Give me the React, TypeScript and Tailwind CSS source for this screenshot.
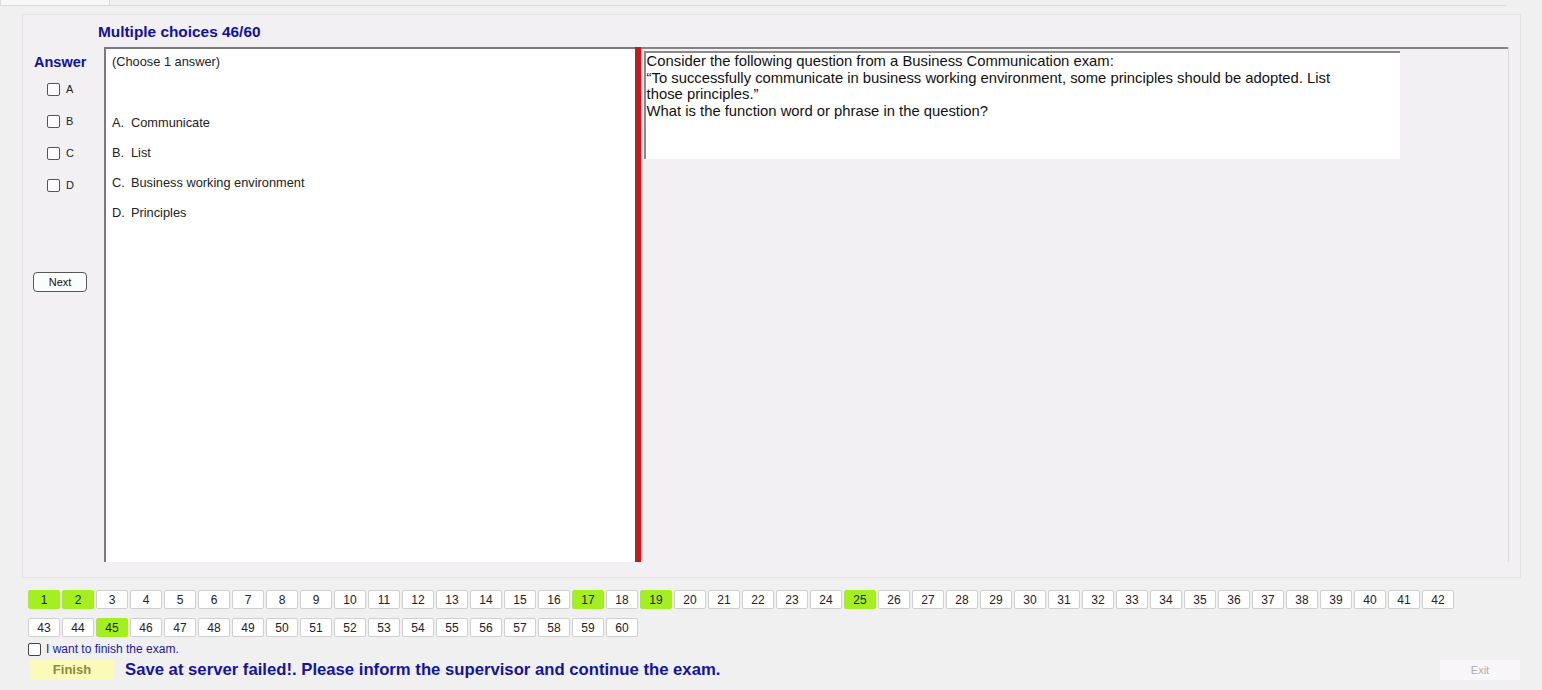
import React from 'react';

const greenNums = [1, 2, 17, 19, 25, 45];

const NumButton: React.FC<{ n: number }> = ({ n }) => {
  const done = greenNums.includes(n);
  return (
    <button
      className={`w-[32px] h-[19px] flex items-center justify-center text-[12px] leading-none rounded-[2px] ${
        done ? 'bg-[#a3ef1f] border border-[#a3ef1f] text-[#222]' : 'bg-white border border-[#cfcfcf] text-[#222]'
      }`}
    >
      {n}
    </button>
  );
};

const App: React.FC = () => {
  const row1 = Array.from({ length: 42 }, (_, i) => i + 1);
  const row2 = Array.from({ length: 18 }, (_, i) => i + 43);

  return (
    <div
      className="w-[1542px] h-[690px] bg-[#f0f0f0] flex flex-col overflow-hidden text-[#111]"
      style={{ fontFamily: '"Liberation Sans", Arial, sans-serif' }}
    >
      {/* tab strip */}
      <div className="h-[6px] flex">
        <div className="w-[110px] h-[6px] bg-[#f7f7f7] border-x border-b border-[#dcdcdc]" />
        <div className="w-[1396px] border-b border-[#dcdcdc]" />
      </div>

      {/* main panel */}
      <div className="mt-[8px] ml-[22px] w-[1499px] h-[564px] bg-[#f2f0f2] border border-[#e4e4e4] flex flex-col">
        <div className="h-[32px] pl-[75px] pt-[8px] leading-[18px]">
          <span className="text-[15.4px] font-bold text-[#1010a2]">Multiple choices 46/60</span>
        </div>

        <div className="flex h-[515px]">
          {/* answer column */}
          <div className="w-[81px] flex flex-col">
            <div className="pl-[11px] pt-[7px] text-[14.5px] leading-[17px] font-bold text-[#1010a2]">Answer</div>
            <div className="flex flex-col gap-[19px] mt-[12px] pl-[24px]">
              {['A', 'B', 'C', 'D'].map(l => (
                <label key={l} className="flex items-center gap-[6px] h-[13px] text-[11px] text-[#222]">
                  <span className="w-[13px] h-[13px] border border-[#555] rounded-[2px] bg-white" />
                  {l}
                </label>
              ))}
            </div>
            <button className="mt-[80px] ml-[10px] w-[54px] h-[20px] border border-[#555] rounded-[4px] bg-[#fbfdfd] text-[11px] text-[#111] flex items-center justify-center">
              Next
            </button>
          </div>

          {/* options */}
          <div className="w-[531px] bg-white border-t-2 border-l-2 border-[#7a7a7a] pl-[6px] pt-[3px] text-[12.8px] text-[#222]">
            <div className="h-[18px]">(Choose 1 answer)</div>
            <div className="flex flex-col gap-[12px] mt-[43px]">
              {['Communicate', 'List', 'Business working environment', 'Principles'].map((t, i) => (
                <div key={t} className="h-[18px] flex">
                  <span className="w-[19px]">{'ABCD'[i]}.</span>
                  <span>{t}</span>
                </div>
              ))}
            </div>
          </div>

          {/* divider */}
          <div className="w-[6px] bg-[#d0141c]" />

          {/* question */}
          <div className="w-[868px] border-t-2 border-[#858585] pt-[2px] pl-[3px] flex flex-col">
            <div className="w-[756px] h-[108px] bg-white border-t-2 border-l-2 border-[#8a8a8a] pl-[1px] text-[14.8px] leading-[16.5px] text-[#111]">
              <div>Consider the following question from a Business Communication exam:</div>
              <div>“To successfully communicate in business working environment, some principles should be adopted. List</div>
              <div>those principles.”</div>
              <div>What is the function word or phrase in the question?</div>
            </div>
          </div>

          <div className="w-[12px] border-l border-[#dadada]" />
        </div>
      </div>

      {/* question number buttons */}
      <div className="mt-[12px] ml-[28px] flex flex-col gap-[9px]">
        <div className="flex gap-[2px]">
          {row1.map(n => (
            <NumButton key={n} n={n} />
          ))}
        </div>
        <div className="flex gap-[2px]">
          {row2.map(n => (
            <NumButton key={n} n={n} />
          ))}
        </div>
      </div>

      <label className="mt-[3px] ml-[28px] flex items-center gap-[5px] text-[12px] text-[#1a1a9a]">
        <span className="w-[13px] h-[13px] border border-[#444] rounded-[2px] bg-white" />
        I want to finish the exam.
      </label>

      <div className="mt-[1px] ml-[30px] h-[22px] flex items-center">
        <button className="w-[84px] h-[20px] bg-[#fcfab8] text-[13px] font-bold text-[#8b8a3a] flex items-center justify-center">
          Finish
        </button>
        <span className="ml-[11px] text-[16.7px] leading-[20px] font-bold text-[#1414a0]">
          Save at server failed!. Please inform the supervisor and continue the exam.
        </span>
        <button className="ml-auto mr-[22px] w-[80px] h-[20px] bg-[#f8f6f8] text-[11px] text-[#b0b0b0] flex items-center justify-center">
          Exit
        </button>
      </div>
    </div>
  );
};

export default App;
